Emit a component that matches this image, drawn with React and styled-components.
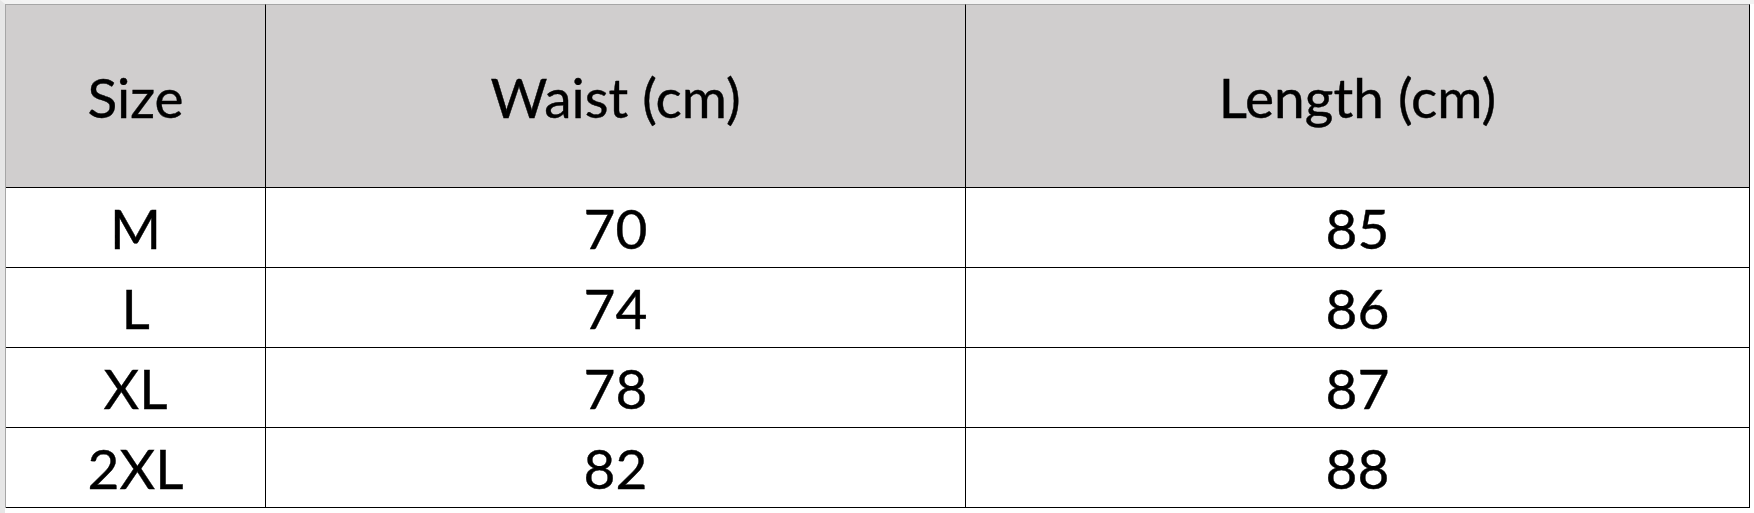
import React from "react";
import styled, { createGlobalStyle } from "styled-components";

const rows = [
  { size: "M", waist: 70, length: 85 },
  { size: "L", waist: 74, length: 86 },
  { size: "XL", waist: 78, length: 87 },
  { size: "2XL", waist: 82, length: 88 },
];

const GlobalStyle = createGlobalStyle`
  html, body {
    margin: 0;
    padding: 0;
    background: #ffffff;
  }
  body {
    font-family: Lato, "Open Sans", sans-serif;
  }
`;

const Sheet = styled.div`
  width: 1754px;
  height: 513px;
  box-sizing: border-box;
  background: #ffffff;
  border-top: 4px solid #f3f3f3;
  border-left: 5px solid #e6e6e6;
`;

const Table = styled.div`
  display: grid;
  grid-template-columns: 260px 700px 784px;
  grid-template-rows: 184px repeat(4, 80px);
  width: max-content;
  border-left: 1px solid #a6a6a6;
`;

const Cell = styled.div`
  box-sizing: border-box;
  display: flex;
  align-items: center;
  justify-content: center;
  padding-top: ${(p) => (p.$head ? "3px" : "2px")};
  border-right: 1px solid #000000;
  border-bottom: 1px solid #000000;
  border-top: ${(p) => (p.$head ? "1px solid #a6a6a6" : "none")};
  background: ${(p) => (p.$head ? "#d0cece" : "#ffffff")};
  color: #000000;
  font-size: 55px;
  line-height: 1;
  -webkit-text-stroke: 0.4px #000000;
`;

export default function App() {
  return (
    <>
      <GlobalStyle />
      <Sheet>
        <Table>
          <Cell $head>Size</Cell>
          <Cell $head>Waist (cm)</Cell>
          <Cell $head>Length (cm)</Cell>
          {rows.map((r) => (
            <React.Fragment key={r.size}>
              <Cell>{r.size}</Cell>
              <Cell>{r.waist}</Cell>
              <Cell>{r.length}</Cell>
            </React.Fragment>
          ))}
        </Table>
      </Sheet>
    </>
  );
}
